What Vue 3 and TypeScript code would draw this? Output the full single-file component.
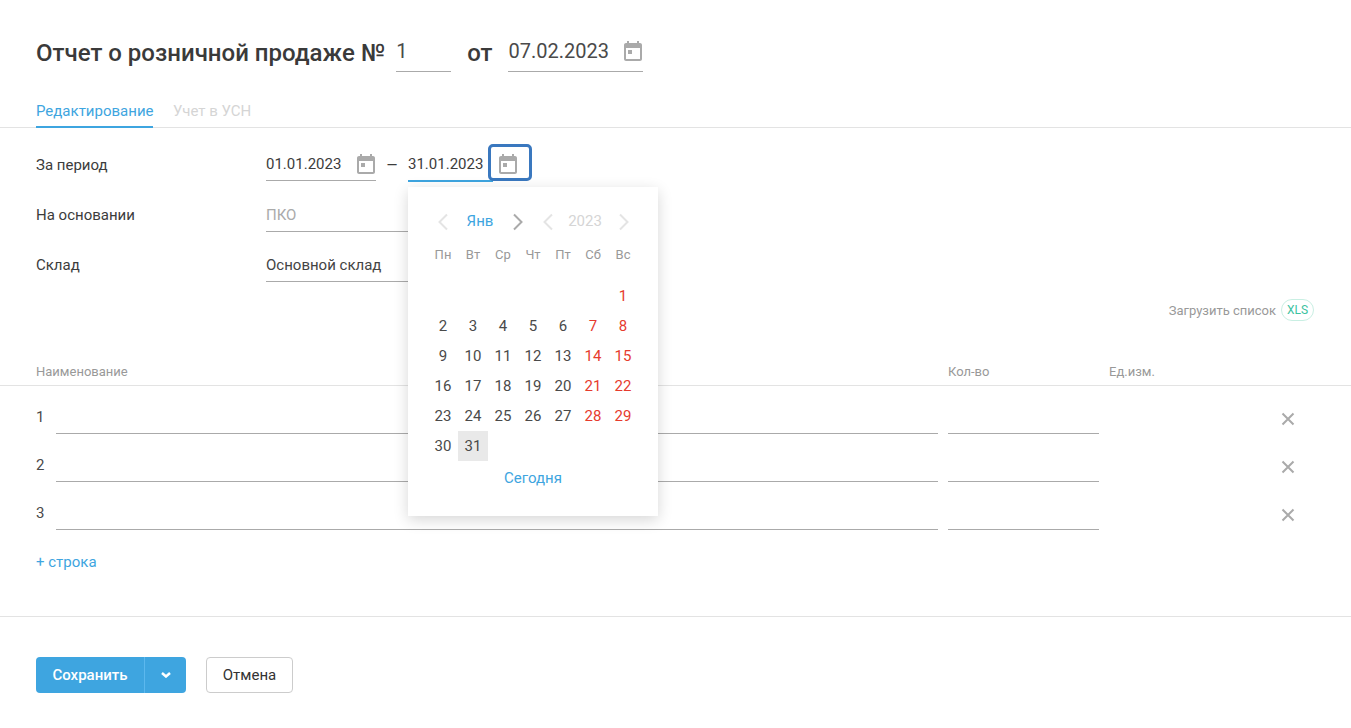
<script setup lang="ts">
const weekdays: string[] = ['Пн', 'Вт', 'Ср', 'Чт', 'Пт', 'Сб', 'Вс']
const days: (number | null)[] = [null, null, null, null, null, null, ...Array.from({ length: 31 }, (_, i) => i + 1)]
const isWeekend = (i: number): boolean => i % 7 >= 5
const rows: number[] = [1, 2, 3]
</script>

<template>
  <div class="page">
    <header class="head">
      <h1 class="title">Отчет о розничной продаже №</h1>
      <div class="head-field num">1</div>
      <span class="title from">от</span>
      <div class="head-field date">
        <span>07.02.2023</span>
        <svg class="cal" viewBox="0 0 18 20"><path fill-rule="evenodd" d="M16 2h-1V0h-2v2H5V0H3v2H2C.9 2 0 2.900 0 4v14c0 1.100.9 2 2 2h14c1.100 0 2-.9 2-2V4c0-1.100-.9-2-2-2zm0 16H2V7h14v11zM4 9h4v4H4z"/></svg>
      </div>
    </header>

    <nav class="tabs">
      <span class="tab active">Редактирование</span>
      <span class="tab muted">Учет в УСН</span>
    </nav>

    <section class="form">
      <div class="row">
        <label class="label">За период</label>
        <div class="date-field first">
          <span>01.01.2023</span>
          <svg class="cal" viewBox="0 0 18 20"><path fill-rule="evenodd" d="M16 2h-1V0h-2v2H5V0H3v2H2C.9 2 0 2.900 0 4v14c0 1.100.9 2 2 2h14c1.100 0 2-.9 2-2V4c0-1.100-.9-2-2-2zm0 16H2V7h14v11zM4 9h4v4H4z"/></svg>
        </div>
        <span class="dash">—</span>
        <div class="range-end">
          <div class="date-field second"><span>31.01.2023</span></div>
          <button class="cal-btn" type="button">
            <svg class="cal" viewBox="0 0 18 20"><path fill-rule="evenodd" d="M16 2h-1V0h-2v2H5V0H3v2H2C.9 2 0 2.900 0 4v14c0 1.100.9 2 2 2h14c1.100 0 2-.9 2-2V4c0-1.100-.9-2-2-2zm0 16H2V7h14v11zM4 9h4v4H4z"/></svg>
          </button>

          <div class="popup">
            <div class="pick">
              <svg class="chev faint" viewBox="0 0 12 18"><path d="M10 1.500 2.500 9l7.500 7.500"/></svg>
              <span class="month">Янв</span>
              <svg class="chev" viewBox="0 0 12 18"><path d="M2 1.500 9.500 9 2 16.500"/></svg>
              <svg class="chev faint" viewBox="0 0 12 18"><path d="M10 1.500 2.500 9l7.500 7.500"/></svg>
              <span class="year">2023</span>
              <svg class="chev faint" viewBox="0 0 12 18"><path d="M2 1.500 9.500 9 2 16.500"/></svg>
            </div>
            <div class="grid weekdays">
              <span v-for="w in weekdays" :key="w" class="wd">{{ w }}</span>
            </div>
            <div class="grid days">
              <span
                v-for="(d, i) in days"
                :key="i"
                class="day"
                :class="{ red: isWeekend(i), selected: d === 31 }"
              >{{ d }}</span>
            </div>
            <div class="today">Сегодня</div>
          </div>
        </div>
      </div>
      <div class="row">
        <label class="label">На основании</label>
        <div class="wide placeholder">ПКО</div>
      </div>
      <div class="row">
        <label class="label">Склад</label>
        <div class="wide">Основной склад</div>
      </div>
    </section>

    <div class="upload">
      <span>Загрузить список</span>
      <span class="xls">XLS</span>
    </div>

    <div class="thead">
      <span class="th-name">Наименование</span>
      <span class="th-qty">Кол-во</span>
      <span class="th-unit">Ед.изм.</span>
    </div>

    <div class="tbody">
      <div v-for="r in rows" :key="r" class="trow">
        <span class="idx">{{ r }}</span>
        <div class="line name"></div>
        <div class="line qty"></div>
        <svg class="x" viewBox="0 0 14 14"><path d="M1.500 1.500l11 11m0-11-11 11"/></svg>
      </div>
    </div>

    <div class="add">+ строка</div>

    <footer class="foot">
      <div class="split">
        <span class="save">Сохранить</span>
        <span class="more">
          <svg viewBox="0 0 10 6"><path d="M1 1l4 3.500L9 1"/></svg>
        </span>
      </div>
      <span class="cancel">Отмена</span>
    </footer>
  </div>
</template>

<style>
html, body { margin: 0; background: #fff; }
</style>

<style scoped>
.page {
  width: 1351px;
  height: 728px;
  overflow: hidden;
  box-sizing: border-box;
  font-family: Roboto, "Noto Sans", sans-serif;
  font-size: 15px;
  color: #3c3c3c;
  background: #fff;
}
.head {
  display: flex;
  align-items: flex-start;
  height: 72px;
  padding: 31px 0 0 36px;
  box-sizing: border-box;
}
.title {
  margin: 0;
  font-size: 24px;
  font-weight: 500;
  line-height: 44px;
  height: 41px;
  color: #3a3a3a;
}
.head-field {
  height: 41px;
  box-sizing: border-box;
  border-bottom: 1px solid #aaa;
  font-size: 20px;
  line-height: 40px;
  color: #4a4a4a;
}
.head-field.num { width: 55px; margin-left: 11px; }
.from { margin-left: 16px; }
.head-field.date {
  width: 135px;
  margin-left: 16px;
  display: flex;
  justify-content: space-between;
  align-items: flex-start;
}
.head-field.date .cal { margin: 10px 1px 0 0; }
.cal { width: 18px; height: 20px; fill: #aaa; flex: none; }

.tabs {
  display: flex;
  gap: 20px;
  height: 56px;
  padding: 0 36px;
  border-bottom: 1px solid #e3e3e3;
  box-sizing: border-box;
  align-items: flex-end;
}
.tab {
  font-size: 15px;
  line-height: 20px;
  height: 29px;
  box-sizing: border-box;
  padding-top: 3px;
}
.tab.active {
  width: 117px;
  white-space: nowrap;
  color: #3ea5e0;
  border-bottom: 2px solid #3ea5e0;
  margin-bottom: -1px;
  height: 30px;
}
.tab.muted { color: #d5d5d5; }

.form { padding: 18px 0 0 36px; }
.row { display: flex; align-items: flex-start; height: 50px; position: relative; }
.label { width: 230px; flex: none; line-height: 38px; font-size: 15px; }
.date-field {
  height: 35px;
  box-sizing: border-box;
  line-height: 36px;
  font-size: 15px;
  display: flex;
  justify-content: space-between;
  align-items: flex-start;
}
.date-field.first { width: 110px; border-bottom: 1px solid #aaa; }
.date-field.first .cal { margin: 8px 1px 0 0; }
.dash { width: 32px; text-align: center; line-height: 38px; font-size: 14px; }
.range-end { display: flex; position: relative; align-items: flex-start; }
.date-field.second { width: 85px; border-bottom: 2px solid #3ea5e0; height: 36px; }
.cal-btn {
  width: 44px;
  height: 37px;
  margin: -2px 0 0 -5px;
  padding: 3px 5px 0 0;
  box-sizing: border-box;
  border: 3px solid #3a78bf;
  border-radius: 5px;
  background: #fff;
  display: flex;
  align-items: center;
  justify-content: center;
}
.wide {
  width: 340px;
  height: 36px;
  box-sizing: border-box;
  border-bottom: 1px solid #aaa;
  line-height: 38px;
  font-size: 15px;
  color: #444;
}
.placeholder { color: #aaa; }

.popup {
  position: absolute;
  left: 0;
  top: 41px;
  width: 250px;
  height: 329px;
  box-sizing: border-box;
  padding: 20px 20px 0;
  background: #fff;
  box-shadow: 0 4px 14px rgba(0, 0, 0, 0.16);
  z-index: 5;
}
.pick { height: 30px; margin-bottom: 3px; display: flex; align-items: center; }
.chev { width: 12px; height: 18px; fill: none; stroke: #aaa; stroke-width: 2; flex: none; }
.chev.faint { stroke: #e4e4e4; }
.pick .chev:nth-child(1) { margin-left: 9px; }
.month { width: 47px; margin: 0 0 2px 7.500px; text-align: center; font-size: 15px; color: #3ea5e0; }
.pick .chev:nth-child(3) { margin-left: 8.500px; }
.pick .chev:nth-child(4) { margin-left: 18px; }
.year { width: 36px; margin: 0 0 2px 13px; text-align: center; font-size: 15px; color: #d5d5d5; }
.pick .chev:nth-child(6) { margin-left: 15px; }

.grid { display: grid; grid-template-columns: repeat(7, 30px); }
.wd { height: 30px; line-height: 30px; text-align: center; font-size: 13px; color: #999; }
.weekdays { height: 30px; }
.days { margin-top: 11px; }
.day { height: 30px; line-height: 30px; text-align: center; font-size: 15px; color: #4a4a4a; }
.day.red { color: #e63b2e; }
.day.selected { background: #e9e9e9; }
.today { margin-top: 2px; height: 30px; line-height: 30px; text-align: center; color: #3ea5e0; font-size: 15px; }

.upload {
  display: flex;
  justify-content: flex-end;
  align-items: center;
  gap: 5px;
  margin-top: 3px;
  padding-right: 37px;
  height: 22px;
  font-size: 13px;
  color: #999;
}
.xls {
  width: 33px;
  height: 22px;
  box-sizing: border-box;
  border: 1px solid #c9efe3;
  border-radius: 11px;
  text-align: center;
  line-height: 20px;
  font-size: 12px;
  font-weight: 400;
  color: #3cc2a0;
}
.thead {
  display: flex;
  height: 65px;
  box-sizing: border-box;
  padding: 41px 0 0 36px;
  border-bottom: 1px solid #e3e3e3;
  font-size: 13px;
  line-height: 20px;
  color: #999;
}
.th-name { width: 912px; }
.th-qty { width: 161px; }
.tbody { padding: 0 0 0 36px; }
.trow { display: flex; height: 48px; align-items: flex-start; }
.idx { width: 20px; flex: none; font-size: 15px; line-height: 20px; margin-top: 21px; color: #4a4a4a; }
.line { height: 48px; box-sizing: border-box; border-bottom: 1px solid #aaa; flex: none; }
.name { width: 882px; }
.qty { width: 151px; margin-left: 10px; }
.x { width: 14px; height: 14px; fill: none; stroke: #aaa; stroke-width: 2; margin: 26px 0 0 182px; flex: none; }
.add { padding-left: 36px; margin-top: 22px; font-size: 15px; line-height: 20px; color: #3ea5e0; height: 64px; border-bottom: 1px solid #e3e3e3; }
.foot { display: flex; gap: 20px; padding: 40px 0 0 36px; }
.split {
  display: flex;
  width: 150px;
  height: 36px;
  border-radius: 4px;
  background: #3ea5e0;
  color: #fff;
  font-size: 15px;
  font-weight: 500;
  line-height: 36px;
  overflow: hidden;
}
.save { width: 108px; text-align: center; border-right: 1px solid #5cb8ee; flex: none; }
.more { flex: 1; display: flex; align-items: center; justify-content: center; }
.more svg { width: 10px; height: 6px; fill: none; stroke: #fff; stroke-width: 2.500; }
.cancel {
  width: 87px;
  height: 36px;
  box-sizing: border-box;
  border: 1px solid #ccc;
  border-radius: 4px;
  text-align: center;
  line-height: 34px;
  font-size: 15px;
  color: #333;
}
</style>
